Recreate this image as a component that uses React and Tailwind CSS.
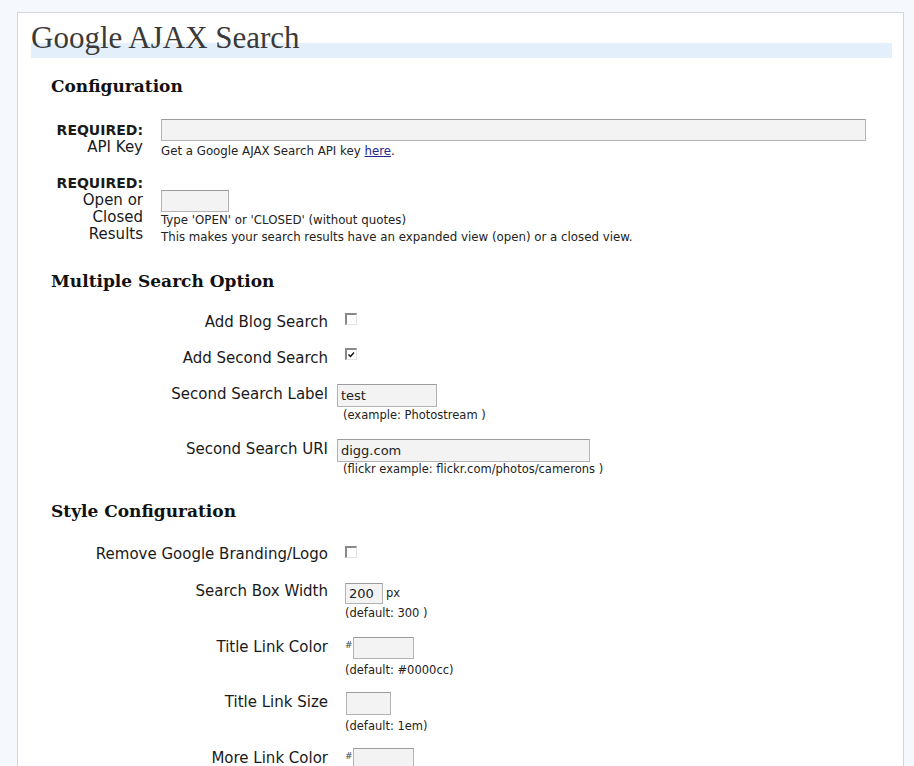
function CheckBox({ checked }) {
  return (
    <span className="block w-[12px] h-[12px] bg-white border-t-2 border-l-2 border-r border-b border-t-[#888] border-l-[#888] border-r-[#e4e4e4] border-b-[#e4e4e4]">
      {checked && (
        <svg width="10" height="10" viewBox="0 0 10 10" className="block">
          <polyline points="1.5,4.5 3.5,6.5 7,2.5" fill="none" stroke="#111" strokeWidth="1.4" />
        </svg>
      )}
    </span>
  )
}

function Field({ w, h = 23, value }) {
  return (
    <div
      className={`${w} border border-[#b3b3b3] border-t-[#9c9c9c] bg-[#f3f3f3] px-[3px] text-[13px] text-[#222] flex items-center`}
      style={{ height: h }}
    >
      {value}
    </div>
  )
}

function Hint({ children, className = "" }) {
  return <div className={`text-[11.5px] leading-[14px] text-[#222] ${className}`}>{children}</div>
}

function Row({ label, mt, pt, children }) {
  return (
    <div className={`flex items-start ${mt}`}>
      <div className={`w-[310px] shrink-0 text-right text-[15px] leading-[17px] text-[#1a1a1a] ${pt}`}>{label}</div>
      <div className="ml-[17px]">{children}</div>
    </div>
  )
}

function Heading({ children, mt }) {
  return (
    <h2 className={`ml-[33px] ${mt} font-['DejaVu_Serif',serif] font-bold text-[17px] leading-[20px] text-[#111]`}>
      {children}
    </h2>
  )
}

export default function App() {
  return (
    <div className="min-h-screen bg-[#f5f9fd] pt-[12px] pl-[17px] font-['DejaVu_Sans',sans-serif] overflow-hidden">
      <div className="w-[887px] h-[770px] border border-[#d4d4d4] bg-white overflow-hidden">
        <h1 className="ml-[13px] mr-[11px] mt-[10px] pb-[5px] font-['Liberation_Serif',serif] text-[31px] leading-[30px] text-[#3a3a3a] bg-[linear-gradient(to_bottom,transparent_20px,#e3f0fb_20px)]">
          Google AJAX Search
        </h1>

        <Heading mt="mt-[18px]">Configuration</Heading>

        <div className="flex items-end mt-[23px]">
          <div className="w-[125px] shrink-0 text-right text-[15px] leading-[17px] text-[#1a1a1a] pb-[4px]">
            <div className="font-bold text-[14px]">REQUIRED:</div>
            <div>API Key</div>
          </div>
          <div className="ml-[18px]">
            <Field w="w-[705px]" h={22} />
            <div className="mt-[2px] text-[11.8px] leading-[17px] text-[#222]">
              Get a Google AJAX Search API key{" "}
              <a href="#" className="text-[#25258f] underline">here</a>.
            </div>
          </div>
        </div>

        <div className="flex items-end mt-[15px]">
          <div className="w-[125px] shrink-0 text-right text-[15px] leading-[17px] text-[#1a1a1a] pb-[3px]">
            <div className="font-bold text-[14px]">REQUIRED:</div>
            <div>Open or</div>
            <div>Closed</div>
            <div>Results</div>
          </div>
          <div className="ml-[18px]">
            <Field w="w-[68px]" h={22} />
            <div className="text-[11.8px] leading-[17px] text-[#222]">
              <div>Type 'OPEN' or 'CLOSED' (without quotes)</div>
              <div>This makes your search results have an expanded view (open) or a closed view.</div>
            </div>
          </div>
        </div>

        <Heading mt="mt-[25px]">Multiple Search Option</Heading>

        <Row label="Add Blog Search" mt="mt-[22px]" pt="pt-[1px]">
          <CheckBox />
        </Row>
        <Row label="Add Second Search" mt="mt-[17px]" pt="pt-[2px]">
          <CheckBox checked />
        </Row>
        <Row label="Second Search Label" mt="mt-[17px]" pt="pt-[2px]">
          <div className="-ml-[8px]">
            <Field w="w-[100px]" value="test" />
            <Hint className="mt-[1px] ml-[6px]">(example: Photostream )</Hint>
          </div>
        </Row>
        <Row label="Second Search URI" mt="mt-[17px]" pt="pt-[2px]">
          <div className="-ml-[8px]">
            <Field w="w-[253px]" value="digg.com" />
            <Hint className="ml-[6px]">(flickr example: flickr.com/photos/camerons )</Hint>
          </div>
        </Row>

        <Heading mt="mt-[25px]">Style Configuration</Heading>

        <Row label="Remove Google Branding/Logo" mt="mt-[25px]" pt="pt-0">
          <CheckBox />
        </Row>
        <Row label="Search Box Width" mt="mt-[20px]" pt="pt-0">
          <div className="flex items-center">
            <Field w="w-[38px]" h={21} value="200" />
            <span className="ml-[3px] text-[11.5px] text-[#222]">px</span>
          </div>
          <Hint className="mt-[2px]">(default: 300 )</Hint>
        </Row>
        <Row label="Title Link Color" mt="mt-[17px]" pt="pt-[2px]">
          <div className="flex items-start">
            <span className="mt-[4px] text-[9px] leading-[9px] text-[#444] w-[8px]">#</span>
            <Field w="w-[61px]" h={22} />
          </div>
          <Hint className="mt-[4px]">(default: #0000cc)</Hint>
        </Row>
        <Row label="Title Link Size" mt="mt-[15px]" pt="pt-[2px]">
          <div className="ml-[1px]">
            <Field w="w-[45px]" h={23} />
          </div>
          <Hint className="mt-[4px]">(default: 1em)</Hint>
        </Row>
        <Row label="More Link Color" mt="mt-[15px]" pt="pt-[2px]">
          <div className="flex items-start">
            <span className="mt-[4px] text-[9px] leading-[9px] text-[#444] w-[8px]">#</span>
            <Field w="w-[61px]" h={22} />
          </div>
        </Row>
      </div>
    </div>
  )
}
